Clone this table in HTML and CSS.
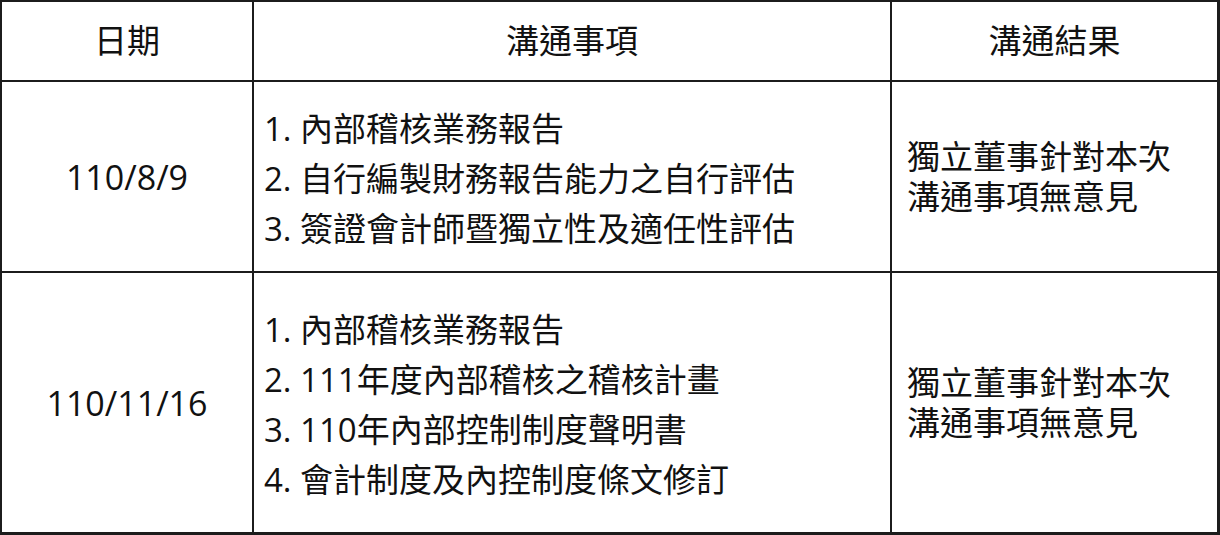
FILE: index.html
```html
<!DOCTYPE html>
<html lang="zh-Hant">
<head>
<meta charset="utf-8">
<title>溝通事項</title>
<link rel="stylesheet" href="styles.css">
</head>
<body>
<div class="table">
  <div class="cell head c1">日期</div>
  <div class="cell head c2">溝通事項</div>
  <div class="cell head c3">溝通結果</div>

  <div class="cell date c1">110/8/9</div>
  <div class="cell items c2">
    <ol class="list">
      <li>1. 內部稽核業務報告</li>
      <li>2. 自行編製財務報告能力之自行評估</li>
      <li>3. 簽證會計師暨獨立性及適任性評估</li>
    </ol>
  </div>
  <div class="cell result c3">
    <div class="lines"><span class="ln">獨立董事針對本次</span><span class="ln">溝通事項無意見</span></div>
  </div>

  <div class="cell date c1 last">110/11/16</div>
  <div class="cell items c2 last">
    <ol class="list">
      <li>1. 內部稽核業務報告</li>
      <li>2. 111年度內部稽核之稽核計畫</li>
      <li>3. 110年內部控制制度聲明書</li>
      <li>4. 會計制度及內控制度條文修訂</li>
    </ol>
  </div>
  <div class="cell result c3 last">
    <div class="lines"><span class="ln">獨立董事針對本次</span><span class="ln">溝通事項無意見</span></div>
  </div>
</div>
</body>
</html>
```

FILE: styles.css
```css
* { box-sizing: border-box; }
html, body {
  margin: 0;
  padding: 0;
  background: #ffffff;
}
body {
  font-family: "Open Sans", "Noto Sans CJK TC", sans-serif;
  font-size: 33px;
  font-weight: 400;
  color: #111111;
}
.table {
  display: grid;
  grid-template-columns: 252px 638px 328px;
  grid-template-rows: 80px 191px 262px;
  width: 1220px;
  height: 535px;
  border-left: 2px solid #1c1c1c;
  border-top: 2px solid #1c1c1c;
}
.cell {
  display: flex;
  align-items: center;
  border-right: 2px solid #1c1c1c;
  border-bottom: 2px solid #1c1c1c;
}
.cell.c3 { border-right-width: 3px; }
.cell.last { border-bottom-width: 3px; }
.head {
  justify-content: center;
  line-height: 40px;
}
.date {
  justify-content: center;
  line-height: 40px;
  font-size: 34px;
}
.items {
  padding: 4px 0 0 10px;
}
.list {
  list-style: none;
  margin: 0;
  padding: 0;
}
.list li {
  line-height: 50px;
  white-space: nowrap;
}
.result {
  padding: 0 0 0 15px;
}
.lines {
  display: flex;
  flex-direction: column;
}
.ln {
  display: block;
  height: 40px;
  line-height: 40px;
  white-space: nowrap;
}
```
